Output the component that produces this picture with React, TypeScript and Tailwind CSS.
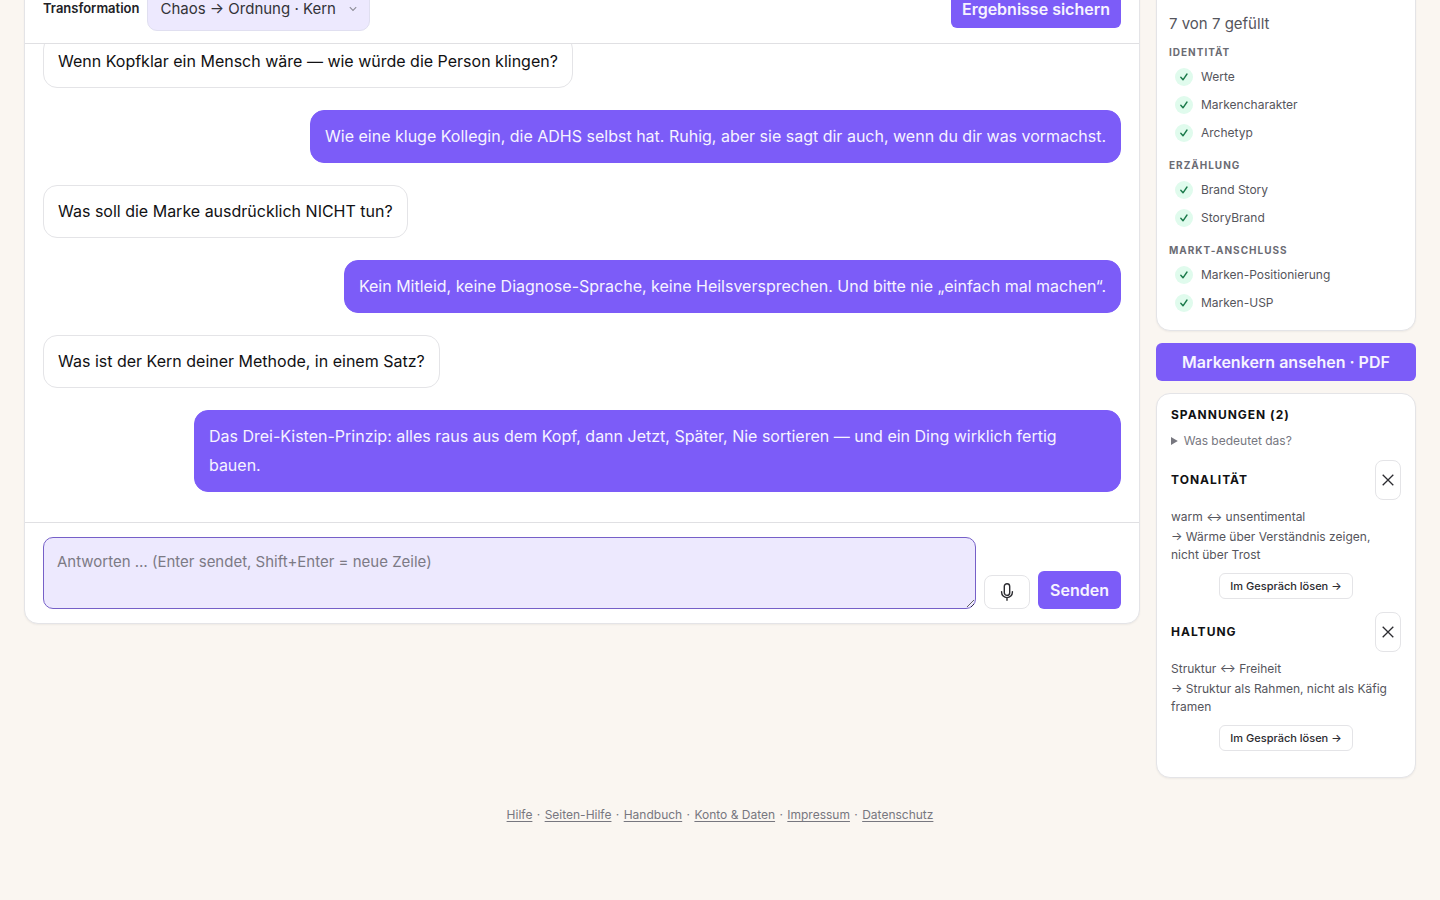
import React from "react";

type Message = {
  from: "coach" | "user";
  text: string;
};

type Tension = {
  title: string;
  poles: string;
  hint: string;
};

const messages: Message[] = [
  {
    from: "coach",
    text: "Wenn Kopfklar ein Mensch wäre — wie würde die Person klingen?",
  },
  {
    from: "user",
    text: "Wie eine kluge Kollegin, die ADHS selbst hat. Ruhig, aber sie sagt dir auch, wenn du dir was vormachst.",
  },
  { from: "coach", text: "Was soll die Marke ausdrücklich NICHT tun?" },
  {
    from: "user",
    text: "Kein Mitleid, keine Diagnose-Sprache, keine Heilsversprechen. Und bitte nie „einfach mal machen“.",
  },
  { from: "coach", text: "Was ist der Kern deiner Methode, in einem Satz?" },
  {
    from: "user",
    text: "Das Drei-Kisten-Prinzip: alles raus aus dem Kopf, dann Jetzt, Später, Nie sortieren — und ein Ding wirklich fertig bauen.",
  },
];

const groups = [
  { title: "Identität", items: ["Werte", "Markencharakter", "Archetyp"] },
  { title: "Erzählung", items: ["Brand Story", "StoryBrand"] },
  { title: "Markt-Anschluss", items: ["Marken-Positionierung", "Marken-USP"] },
];

const tensions: Tension[] = [
  {
    title: "Tonalität",
    poles: "warm ↔ unsentimental",
    hint: "→ Wärme über Verständnis zeigen, nicht über Trost",
  },
  {
    title: "Haltung",
    poles: "Struktur ↔ Freiheit",
    hint: "→ Struktur als Rahmen, nicht als Käfig framen",
  },
];

const footerLinks = [
  "Hilfe",
  "Seiten-Hilfe",
  "Handbuch",
  "Konto & Daten",
  "Impressum",
  "Datenschutz",
];

const CheckIcon = () => (
  <span className="flex size-[18px] items-center justify-center rounded-full bg-[#e0fbed]">
    <svg
      viewBox="0 0 10 10"
      className="size-[10px]"
      fill="none"
      stroke="#1b7a4b"
      strokeWidth="1.4"
      strokeLinecap="round"
      strokeLinejoin="round"
      aria-hidden="true"
    >
      <path d="M1.8 5.2 4 7.8 8 2" />
    </svg>
  </span>
);

const CloseIcon = () => (
  <svg
    viewBox="0 0 12 12"
    className="size-3"
    fill="none"
    stroke="currentColor"
    strokeWidth="1.3"
    aria-hidden="true"
  >
    <path d="M.7.7l10.6 10.6M11.3.7L.7 11.3" />
  </svg>
);

const MicIcon = () => (
  <svg
    viewBox="0 0 14 18"
    className="h-[18px] w-[14px]"
    fill="none"
    stroke="currentColor"
    strokeWidth="1.4"
    strokeLinecap="round"
    aria-hidden="true"
  >
    <rect x="4.3" y=".8" width="5.4" height="11.6" rx="2.7" />
    <path d="M1.6 8.6v.6a5.4 5.4 0 0 0 10.8 0v-.6M7 14.6v2.6" />
  </svg>
);

const ChatBubble: React.FC<{ message: Message }> = ({ message }) => (
  <li
    className={
      "max-w-[86%] rounded-[14px] border px-[14px] py-[11px] text-base leading-[29px] " +
      (message.from === "user"
        ? "self-end border-[#7c5cf8] bg-[#7c5cf8] text-[#f6f3ff]"
        : "self-start border-[#e4e4e7] bg-white text-[#111113]")
    }
  >
    {message.text}
  </li>
);

const ChatPanel = () => (
  <main className="-mt-6 min-w-0 flex-1 overflow-hidden rounded-[14px] border border-[#e4e4e7] bg-white shadow-xs">
    <div className="flex items-center justify-between border-b border-[#e0e0e3] px-[18px] pt-[10px] pb-3">
      <div className="flex items-center gap-2">
        <label
          htmlFor="transformation"
          className="text-[13px] font-semibold text-[#222226]"
        >
          Transformation
        </label>
        <div className="relative">
          <select
            id="transformation"
            className="block h-11 appearance-none rounded-[10px] border border-[#e0dff0] bg-[#ede9fe] pr-[33px] pl-3 text-[15px] text-[#333338]"
          >
            <option>Chaos → Ordnung · Kern</option>
          </select>
          <svg
            viewBox="0 0 10 6"
            className="pointer-events-none absolute top-1/2 right-[13px] h-[5px] w-[8px] -translate-y-1/2"
            fill="none"
            stroke="#8b8b94"
            strokeWidth="1.3"
            aria-hidden="true"
          >
            <path d="M1 .8l4 4 4-4" />
          </svg>
        </div>
      </div>
      <button
        type="button"
        className="h-[38px] rounded-md bg-[#7c5cf8] px-[11px] text-base font-semibold text-[#f6f3ff]"
      >
        Ergebnisse sichern
      </button>
    </div>

    <ul className="flex h-[478px] flex-col justify-end gap-[22px] overflow-hidden px-[18px] pb-[30px]">
      {messages.map((message) => (
        <ChatBubble key={message.text} message={message} />
      ))}
    </ul>

    <form
      className="flex items-end gap-2 border-t border-[#e0e0e3] px-[18px] py-[14px]"
      onSubmit={(e) => e.preventDefault()}
    >
      <textarea
        aria-label="Antwort"
        placeholder="Antworten … (Enter sendet, Shift+Enter = neue Zeile)"
        className="block h-[72px] min-w-0 flex-1 resize-y rounded-[10px] border border-[#7660c8] bg-[#ede9fe] px-[13px] py-3 text-[15px] leading-6 outline-none placeholder:text-[#7c7a85]"
      />
      <button
        type="button"
        aria-label="Spracheingabe"
        className="flex h-[34px] w-[46px] items-center justify-center rounded-lg border border-[#e4e4e7] bg-white text-[#2b2b30]"
      >
        <MicIcon />
      </button>
      <button
        type="submit"
        className="h-[38px] rounded-md bg-[#7c5cf8] px-3 text-base font-semibold text-[#f6f3ff]"
      >
        Senden
      </button>
    </form>
  </main>
);

const ProgressCard = () => (
  <section className="-mt-6 rounded-[14px] border border-[#e4e4e7] bg-white px-3 pt-[34px] pb-3 shadow-xs">
    <p className="text-[15px] leading-[25px] text-[#55555c]">7 von 7 gefüllt</p>
    <div className="mt-2 flex flex-col gap-[9px]">
      {groups.map((group) => (
        <div key={group.title}>
          <h3 className="text-[10px] leading-4 font-bold tracking-[1px] text-[#6b6b73] uppercase">
            {group.title}
          </h3>
          <ul className="mt-[3px]">
            {group.items.map((item) => (
              <li
                key={item}
                className="flex h-7 items-center gap-2 pl-[6px] text-xs text-[#55555c] last:mb-px"
              >
                <CheckIcon />
                {item}
              </li>
            ))}
          </ul>
        </div>
      ))}
    </div>
  </section>
);

const TensionItem: React.FC<{ tension: Tension }> = ({ tension }) => (
  <article className="text-xs leading-[18px] text-[#55555c]">
    <div className="flex items-center justify-between">
      <h3 className="text-xs font-bold tracking-[1px] text-[#111113] uppercase">
        {tension.title}
      </h3>
      <button
        type="button"
        aria-label={tension.title + " verwerfen"}
        className="flex h-10 w-[26px] items-center justify-center rounded-lg border border-[#e4e4e7] text-[#2b2b30]"
      >
        <CloseIcon />
      </button>
    </div>
    <p className="mt-2">{tension.poles}</p>
    <p className="mt-[2px]">{tension.hint}</p>
    <button
      type="button"
      className="mx-auto mt-[9px] block h-[26px] rounded-md border border-[#e4e4e7] px-[10px] text-[11px] font-medium text-[#2b2b30]"
    >
      Im Gespräch lösen →
    </button>
  </article>
);

const TensionsCard = () => (
  <section className="rounded-[14px] border border-[#e4e4e7] bg-white px-[14px] pt-3 pb-[26px] shadow-xs">
    <h2 className="text-xs leading-[18px] font-bold tracking-[1px] text-[#111113] uppercase">
      Spannungen (2)
    </h2>
    <details className="mt-2 text-xs leading-[18px] text-[#77777f]">
      <summary>Was bedeutet das?</summary>
    </details>
    <div className="mt-[10px] flex flex-col gap-[13px]">
      {tensions.map((tension) => (
        <TensionItem key={tension.title} tension={tension} />
      ))}
    </div>
  </section>
);

export default function App() {
  return (
    <div className="min-h-screen overflow-hidden bg-[#faf6f1] font-[Inter,sans-serif] text-[#111113]">
      <div className="flex items-start gap-4 px-6">
        <ChatPanel />
        <aside className="-mb-px flex w-[260px] shrink-0 flex-col gap-3">
          <ProgressCard />
          <button
            type="button"
            className="h-[38px] rounded-md bg-[#7c5cf8] text-base font-semibold text-[#f6f3ff]"
          >
            Markenkern ansehen · PDF
          </button>
          <TensionsCard />
        </aside>
      </div>
      <footer className="mt-7 text-center text-xs leading-5 text-[#77777f]">
        {footerLinks.map((link, i) => (
          <React.Fragment key={link}>
            {i > 0 && <span className="mx-px"> · </span>}
            <a href="#" className="underline underline-offset-2">
              {link}
            </a>
          </React.Fragment>
        ))}
      </footer>
    </div>
  );
}
